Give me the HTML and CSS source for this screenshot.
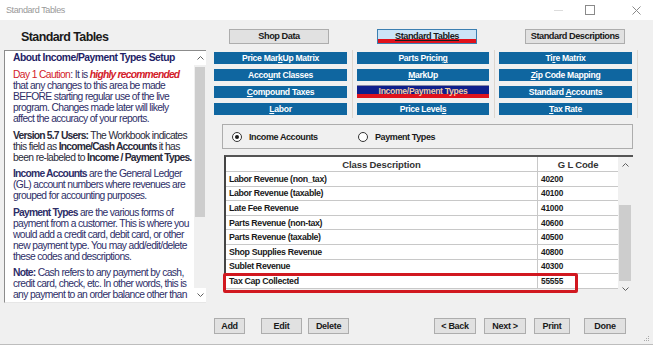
FILE: index.html
```html
<!DOCTYPE html>
<html>
<head>
<meta charset="utf-8">
<link rel="stylesheet" href="styles.css">
</head>
<body>
<div class="titlebar">
  <span class="title">Standard Tables</span>
  <div class="controls">
    <span class="ctl min"></span>
    <span class="ctl max"></span>
    <span class="ctl close">
      <svg width="9" height="9" viewBox="0 0 9 9"><path d="M0.5 0.5 L8.5 8.5 M8.5 0.5 L0.5 8.5" stroke="#8a8a8a" stroke-width="1" fill="none"/></svg>
    </span>
  </div>
</div>
<div class="window">
  <div class="leftcol">
    <h1 class="heading">Standard Tables</h1>
    <div class="infobox">
      <div class="infotext">
        <p class="ihead">About Income/Payment Types Setup</p>
        <p><span class="red">Day 1 Caution</span>: It is <b class="red"><i>highly recommended</i></b><br>that any changes to this area be made<br>BEFORE starting regular use of the live<br>program. Changes made later will likely<br>affect the accuracy of your reports.</p>
        <p class="dark"><b>Version 5.7 Users:</b> The Workbook indicates<br>this field as <b>Income/Cash Accounts</b> it has<br>been re-labeled to <b>Income / Payment Types.</b></p>
        <p><b>Income Accounts</b> are the General Ledger<br>(GL) account numbers where revenues are<br>grouped for accounting purposes.</p>
        <p><b>Payment Types</b> are the various forms of<br>payment from a customer. This is where you<br>would add a credit card, debit card, or other<br>new payment type. You may add/edit/delete<br>these codes and descriptions.</p>
        <p><b>Note:</b> Cash refers to any payment by cash,<br>credit card, check, etc. In other words, this is<br>any payment to an order balance other than</p>
      </div>
      <div class="vscroll">
        <span class="arr up"><svg width="7" height="4" viewBox="0 0 7 4"><path d="M0.5 3.5 L3.5 0.5 L6.5 3.5" stroke="#606060" fill="none"/></svg></span>
        <div class="track"><div class="thumb left-thumb"></div></div>
        <span class="arr dn"><svg width="7" height="4" viewBox="0 0 7 4"><path d="M0.5 0.5 L3.5 3.5 L6.5 0.5" stroke="#606060" fill="none"/></svg></span>
      </div>
    </div>
  </div>
  <div class="rightcol">
    <div class="toprow">
      <button class="gbtn top">Shop Data</button>
      <button class="gbtn top active"><u>Standard Tables</u></button>
      <button class="gbtn top">Standard Descriptions</button>
    </div>
    <div class="grid">
      <div class="col">
        <span class="bbtn">Price Mar<u>k</u>Up Matrix</span>
        <span class="bbtn">Acco<u>u</u>nt Classes</span>
        <span class="bbtn"><u>C</u>ompound Taxes</span>
        <span class="bbtn"><u>L</u>abor</span>
      </div>
      <div class="col">
        <span class="bbtn">Parts Pricin<u>g</u></span>
        <span class="bbtn"><u>M</u>arkUp</span>
        <span class="bbtn cur">Income/Payment Types</span>
        <span class="bbtn">Price Level<u>s</u></span>
      </div>
      <div class="col">
        <span class="bbtn">Ti<u>r</u>e Matrix</span>
        <span class="bbtn"><u>Z</u>ip Code Mapping</span>
        <span class="bbtn">Standard <u>A</u>ccounts</span>
        <span class="bbtn"><u>T</u>ax Rate</span>
      </div>
    </div>
    <div class="radios">
      <div class="radio first"><span class="circle on"></span><span>Income Accounts</span></div>
      <div class="radio"><span class="circle"></span><span>Payment Types</span></div>
    </div>
    <div class="table">
      <div class="tbody">
        <div class="row head"><span class="c1">Class Description</span><span class="c2">G L Code</span></div>
        <div class="row"><span class="c1">Labor Revenue (non_tax)</span><span class="c2">40200</span></div>
        <div class="row"><span class="c1">Labor Revenue (taxable)</span><span class="c2">40100</span></div>
        <div class="row"><span class="c1">Late Fee Revenue</span><span class="c2">41000</span></div>
        <div class="row"><span class="c1">Parts Revenue (non-tax)</span><span class="c2">40600</span></div>
        <div class="row"><span class="c1">Parts Revenue (taxable)</span><span class="c2">40500</span></div>
        <div class="row"><span class="c1">Shop Supplies Revenue</span><span class="c2">40800</span></div>
        <div class="row"><span class="c1">Sublet Revenue</span><span class="c2">40300</span></div>
        <div class="row last"><span class="c1">Tax Cap Collected</span><span class="c2">55555</span></div>
        <div class="redbox"></div>
      </div>
      <div class="vscroll tscroll">
        <span class="arr up"><svg width="7" height="4" viewBox="0 0 7 4"><path d="M0.5 3.5 L3.5 0.5 L6.5 3.5" stroke="#606060" fill="none"/></svg></span>
        <div class="track"><div class="thumb table-thumb"></div></div>
        <span class="arr dn"><svg width="7" height="4" viewBox="0 0 7 4"><path d="M0.5 0.5 L3.5 3.5 L6.5 0.5" stroke="#606060" fill="none"/></svg></span>
      </div>
    </div>
    <div class="bottomrow">
      <div class="bgroup">
        <button class="gbtn sm w31">Add</button>
        <button class="gbtn sm w41 gapl">Edit</button>
        <button class="gbtn sm w41">Delete</button>
      </div>
      <div class="bgroup">
        <button class="gbtn sm w42">&lt; Back</button>
        <button class="gbtn sm w42">Next &gt;</button>
        <button class="gbtn sm w36">Print</button>
        <button class="gbtn sm w42 gapl2">Done</button>
      </div>
    </div>
  </div>
  <span class="grip">
    <svg width="6" height="6" viewBox="0 0 6 6"><rect x="4" y="0" width="1" height="1" fill="#aaa"/><rect x="2" y="2" width="1" height="1" fill="#aaa"/><rect x="4" y="2" width="1" height="1" fill="#aaa"/><rect x="0" y="4" width="1" height="1" fill="#aaa"/><rect x="2" y="4" width="1" height="1" fill="#aaa"/><rect x="4" y="4" width="1" height="1" fill="#aaa"/></svg>
  </span>
</div>
</body>
</html>
```
FILE: styles.css
```css
* { box-sizing: border-box; }
html, body { margin: 0; padding: 0; }
body {
  width: 653px;
  height: 347px;
  overflow: hidden;
  background: #ffffff;
  font-family: "Liberation Sans", Arial, sans-serif;
}
.titlebar {
  height: 20px;
  background: #ffffff;
  display: flex;
  align-items: center;
  justify-content: space-between;
  padding-left: 6px;
}
.title {
  font-size: 9px;
  color: #9a9a9a;
  letter-spacing: -0.4px;
}
.controls {
  display: flex;
  align-items: center;
  height: 20px;
  padding-right: 12px;
}
.ctl {
  width: 31px;
  height: 20px;
  display: flex;
  align-items: center;
  justify-content: center;
}
.ctl.min::before {
  content: "";
  width: 9px;
  height: 1px;
  background: #dcdcdc;
}
.ctl.max::before {
  content: "";
  width: 8px;
  height: 8px;
  border: 1px solid #8a8a8a;
}
.ctl.close { width: 36px; justify-content: flex-end; }
.window {
  position: relative;
  height: 325px;
  background: #f0f0f0;
  border-bottom: 1px solid #bdbdbd;
  display: flex;
}
.leftcol {
  width: 214px;
  flex: none;
  padding: 10px 0 0 4px;
}
.heading {
  margin: 0 0 5px 17px;
  font-size: 12.5px;
  letter-spacing: -0.6px;
  font-weight: bold;
  color: #1a1a1a;
  line-height: 15px;
  height: 15px;
}
.infobox {
  width: 202px;
  height: 253px;
  background: #ffffff;
  border-top: 1px solid #8c8c8c;
  border-left: 1px solid #8c8c8c;
  border-bottom: 1px solid #e6e6e6;
  display: flex;
  overflow: hidden;
}
.infotext {
  flex: 1;
  padding: 1px 0 0 8px;
  font-size: 10.3px;
  line-height: 11px;
  color: #2e2e68;
  overflow: hidden;
  white-space: nowrap;
  letter-spacing: -0.62px;
}
.infotext b { letter-spacing: -0.78px; }
.infotext p { margin: 0 0 5.6px 0; }
.infotext p.ihead {
  font-weight: bold;
  color: #1e1e66;
  margin-bottom: 6px;
  letter-spacing: -0.5px;
}
.infotext .red { color: #d3202a; }
.infotext .dark { color: #2a2a3a; }
.vscroll {
  width: 12px;
  flex: none;
  background: #ffffff;
  display: flex;
  flex-direction: column;
}
.arr {
  height: 14px;
  display: flex;
  align-items: center;
  justify-content: center;
  flex: none;
}
.track {
  flex: 1;
  background: #f0f0f0;
}
.thumb {
  background: #cdcdcd;
  margin: 0 1px;
}
.left-thumb { height: 150px; margin-top: 2px; }
.rightcol {
  width: 425px;
  flex: none;
  padding-top: 9px;
}
.toprow {
  display: flex;
  height: 15px;
  padding-left: 15px;
  gap: 48px;
}
.gbtn {
  font-family: "Liberation Sans", Arial, sans-serif;
  font-weight: bold;
  font-size: 9px;
  letter-spacing: -0.3px;
  white-space: nowrap;
  color: #1a1a1a;
  background: #e1e1e1;
  border: 1px solid #adadad;
  width: 100px;
  height: 15px;
  padding: 0;
  margin: 0;
  line-height: 13px;
}
.gbtn.top { letter-spacing: -0.45px; font-size: 9.2px; }
.gbtn.active {
  background: #cce4f7;
  border-color: #3c7fb1;
  box-shadow: inset 0 -4px 0 #e0121c;
  line-height: 11px;
}
.grid {
  display: grid;
  grid-template-columns: 133px 132px 133px;
  column-gap: 10px;
  margin-top: 8px;
}
.col {
  display: flex;
  flex-direction: column;
  gap: 5px;
  position: relative;
}
.col::after {
  content: "";
  position: absolute;
  right: -6px;
  top: -2px;
  bottom: -3px;
  width: 1px;
  background: #dcd6cf;
}
.bbtn {
  height: 12px;
  background: #0f66a0;
  color: #ffffff;
  font-weight: bold;
  font-size: 8.6px;
  letter-spacing: -0.3px;
  line-height: 12px;
  text-align: center;
  display: block;
  white-space: nowrap;
}
.bbtn.cur {
  background: #0e1f8c;
  color: #f3caa0;
  box-shadow: inset 0 -4px 0 #e0121c;
  line-height: 10px;
  height: 13px;
  margin-top: -1px;
  border-top: 1px solid #8a8aa8;
}
.radios {
  margin: 9px 6px 0 8px;
  height: 25px;
  border: 1px solid #adadad;
  display: flex;
  align-items: center;
  padding-left: 9px;
}
.radio {
  display: flex;
  align-items: center;
  font-weight: bold;
  font-size: 9px;
  letter-spacing: -0.4px;
  color: #1a1a1a;
  white-space: nowrap;
}
.radio.first { width: 126px; }
.circle {
  width: 10px;
  height: 10px;
  border: 1px solid #333;
  border-radius: 50%;
  background: #fff;
  margin-right: 7px;
  position: relative;
  flex: none;
}
.circle.on::after {
  content: "";
  position: absolute;
  left: 2px;
  top: 2px;
  width: 4px;
  height: 4px;
  border-radius: 50%;
  background: #1a1a1a;
}
.table {
  margin: 6px 6px 0 10px;
  height: 135px;
  border-top: 2px solid #555;
  border-left: 2px solid #444;
  background: #f0f0f0;
  display: flex;
}
.tbody {
  width: 392px;
  flex: none;
  position: relative;
  background: #ffffff;
  align-self: flex-start;
}
.row {
  display: flex;
  height: 14.6px;
  border-bottom: 1px solid #c8c8c8;
  font-weight: bold;
  font-size: 8.8px;
  letter-spacing: -0.35px;
  color: #1a1a1a;
  align-items: center;
  white-space: nowrap;
}
.row .c1 {
  width: 312px;
  padding-left: 3px;
  border-right: 1px solid #c8c8c8;
  height: 100%;
  display: flex;
  align-items: center;
}
.row .c2 {
  width: 80px;
  padding-left: 3px;
  height: 100%;
  display: flex;
  align-items: center;
  font-size: 8.3px;
  letter-spacing: -0.2px;
}
.row.head {
  height: 15px;
  font-size: 9.5px;
  letter-spacing: -0.1px;
  color: #333;
}
.row.head .c1 { justify-content: center; padding-left: 0; }
.row.head .c2 { justify-content: center; font-size: 9.5px; padding-left: 0; }
.redbox {
  position: absolute;
  left: -3px;
  width: 355px;
  top: 116px;
  height: 20px;
  border: 3px solid #d11820;
  border-radius: 2px;
}
.tscroll {
  width: 14px;
  background: #f0f0f0;
}
.tscroll .arr { height: 16px; background: #f0f0f0; }
.table-thumb {
  margin-top: 32px;
  height: 76px;
}
.bottomrow {
  display: flex;
  justify-content: space-between;
  margin-top: 28px;
  padding-right: 13px;
}
.bgroup {
  display: flex;
  gap: 8px;
}
.gbtn.sm { height: 16px; line-height: 14px; }
.gapl { margin-left: 8px; }
.gapl2 { margin-left: 6px; }
.w31 { width: 31px; }
.w41 { width: 41px; }
.w42 { width: 42px; }
.w36 { width: 36px; }
.bgroup .w41 + .w41 { margin-left: -2px; }
.grip {
  position: absolute;
  right: 3px;
  bottom: 2px;
  line-height: 0;
}
```
